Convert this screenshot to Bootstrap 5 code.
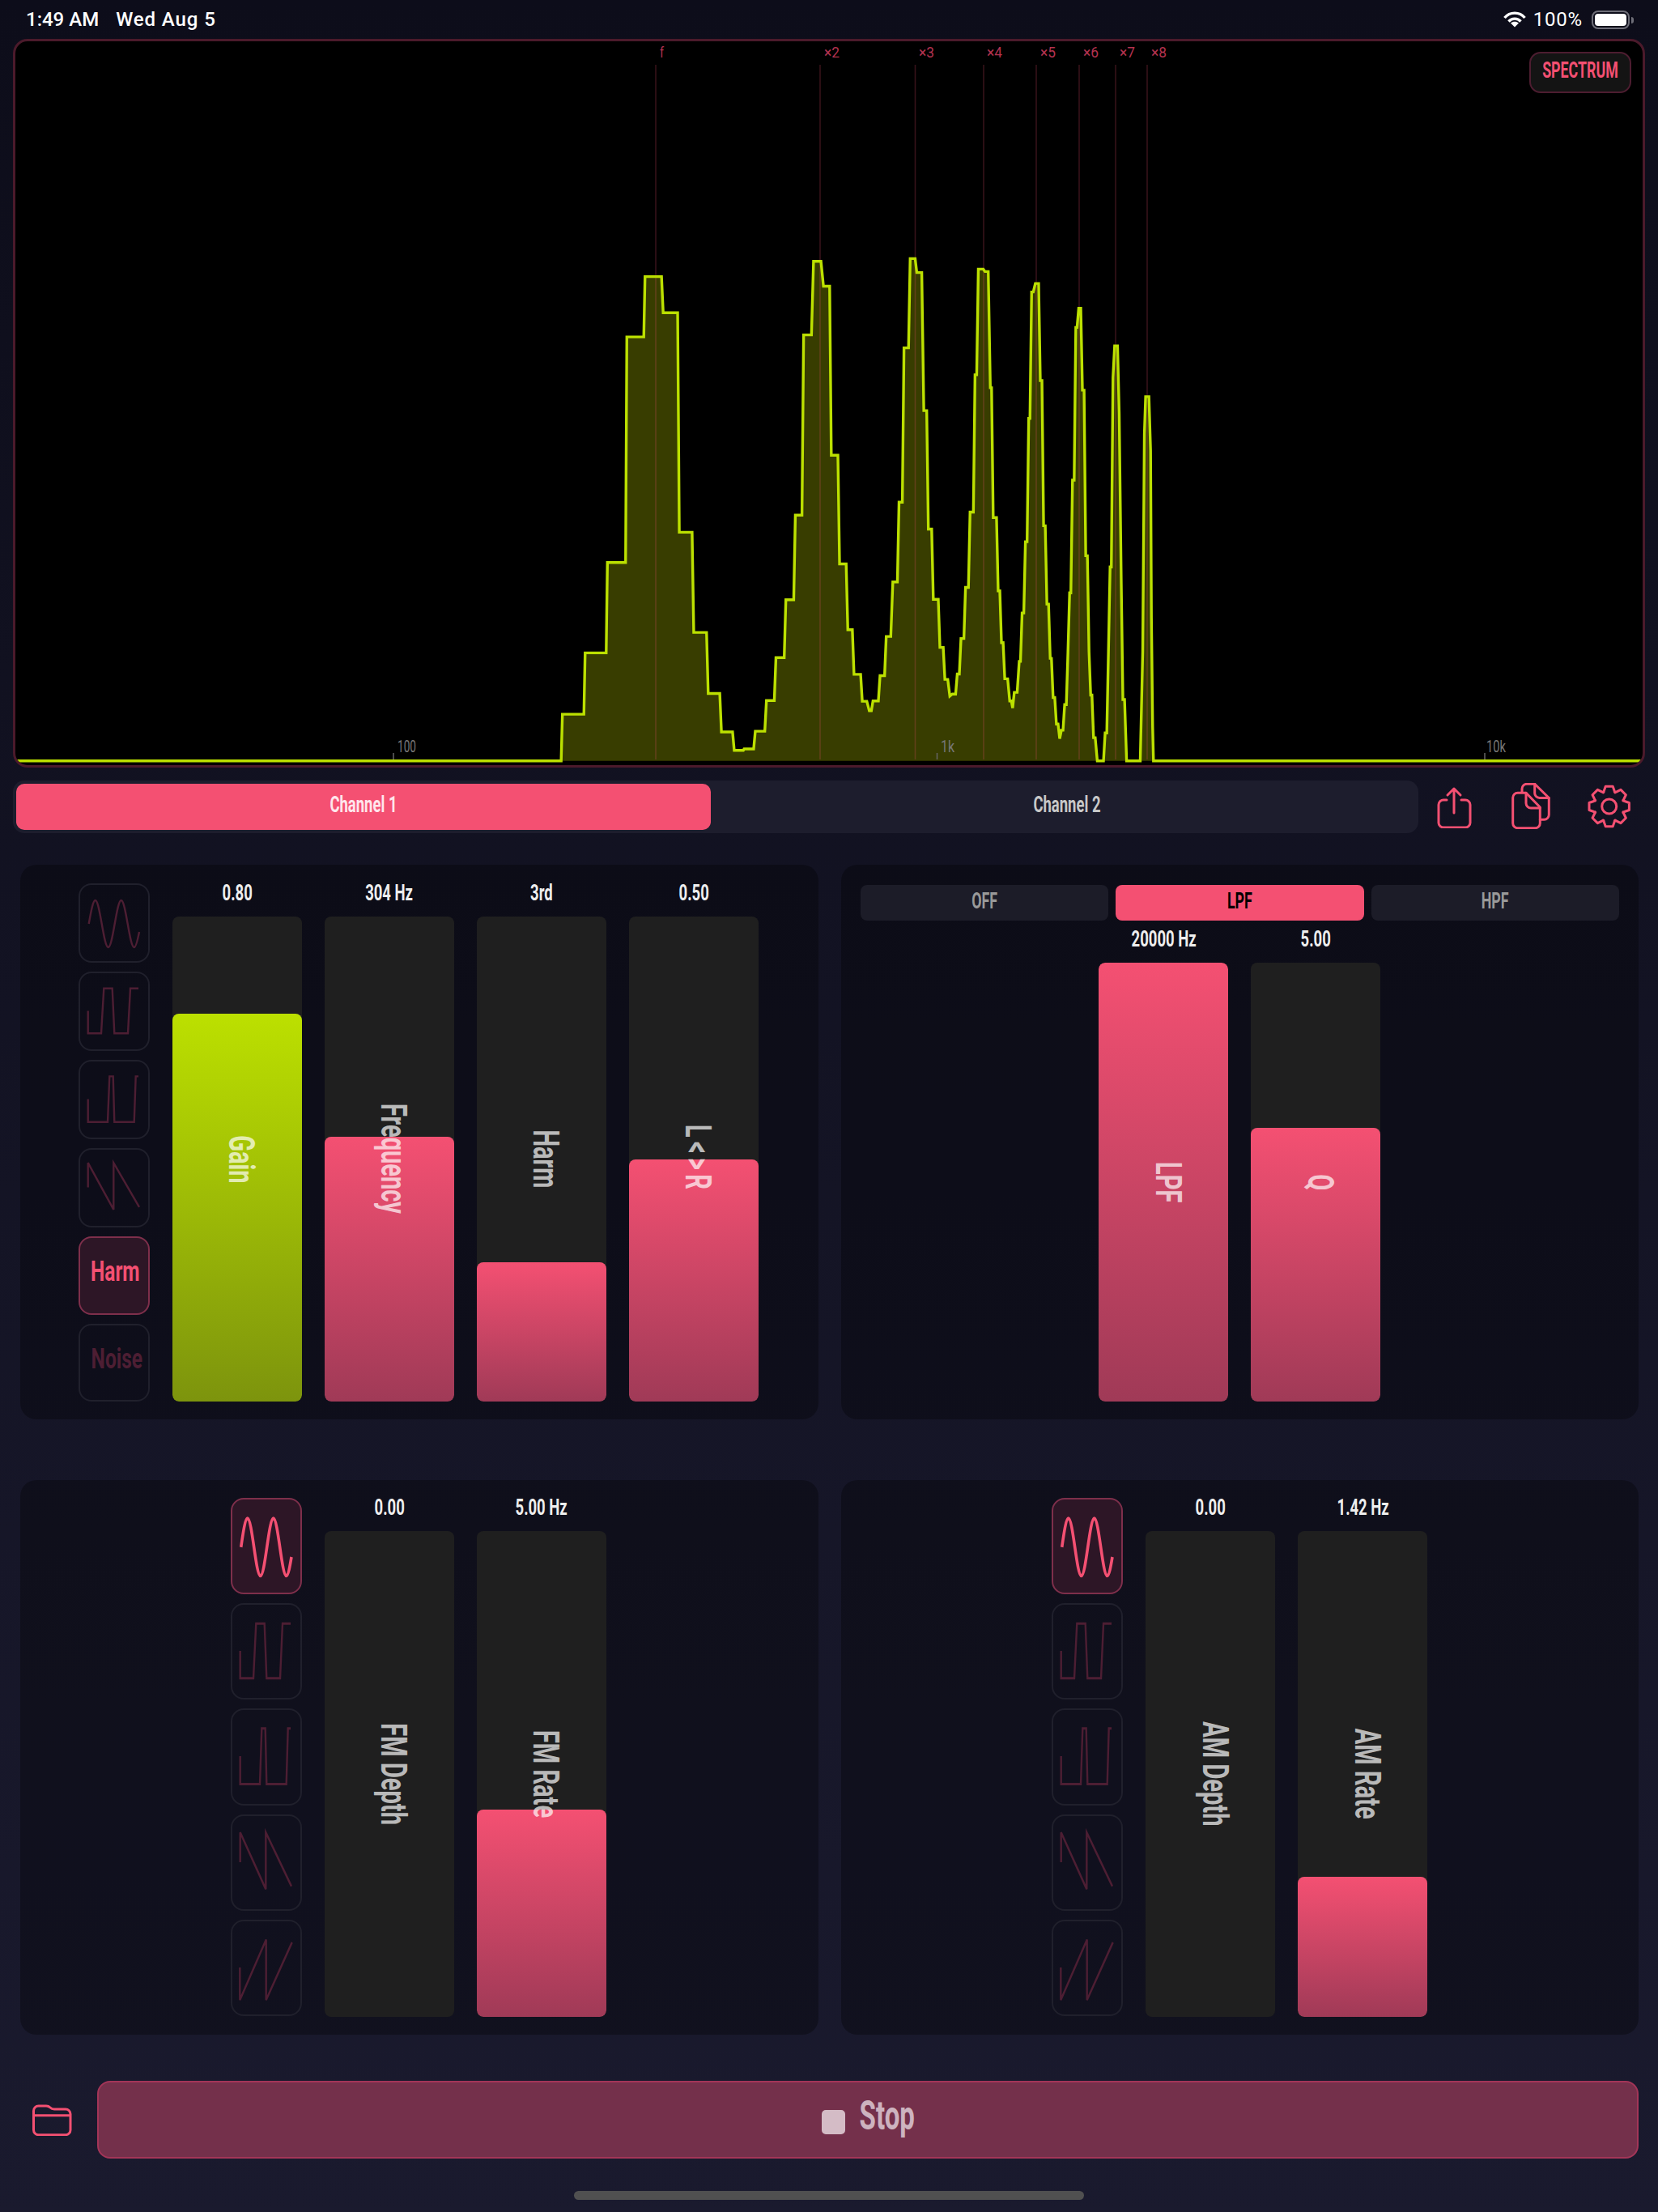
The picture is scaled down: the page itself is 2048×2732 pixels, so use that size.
<!DOCTYPE html>
<html lang="en">
<head>
<meta charset="UTF-8">
<title>Tone Generator</title>
<link rel="stylesheet" href="https://cdn.jsdelivr.net/npm/bootstrap@5.3.0/dist/css/bootstrap.min.css">
<style>
html, body { height: 2732px; }
body {
    margin: 0;
    width: 2048px;
    color: #eee;
    background: linear-gradient(180deg, #0d0d1a 0%, #1a1a2e 100%);
    font-family: Roboto, "Liberation Sans", sans-serif;
    overflow: hidden;
}
.cond { display: inline-block; transform: scaleX(.66); font-weight: 700; white-space: nowrap; }

.status-bar { height: 48px; padding: 0 35px 0 32px; font-size: 24px; font-weight: 500; color: #fff; line-height: 48px; }
.status-bar .when { margin-right: 21px; }
.status-bar .date { letter-spacing: .9px; }
.status-bar .pct { font-weight: 400; letter-spacing: .8px; }
.batt { width: 47px; height: 23px; border: 2px solid #6e6e78; border-radius: 8px; padding: 2px; position: relative; margin-left: 11px; }
.batt i { display: block; height: 100%; background: #fff; border-radius: 4px; }
.batt::after { content: ""; position: absolute; right: -7px; top: 6px; width: 3px; height: 8px; background: #6e6e78; border-radius: 0 3px 3px 0; }

.spectrum { height: 900px; margin: 0 16px; background: #000; border: 3px solid #4b1a2b; border-radius: 18px; position: relative; overflow: hidden; }
.spectrum svg { position: absolute; inset: 0; width: 100%; height: 100%; }
.spectrum text { font-family: Roboto, "Liberation Sans", sans-serif; }
.spec-badge { position: absolute; top: 13px; right: 13px; width: 126px; height: 51px; padding-bottom: 4px; margin-right: 1px; background: #141414; border: 2px solid #4d1d30; border-radius: 14px; color: #f45072; font-size: 27px; }

.tabs-row { margin-top: 16px; padding-left: 16px; }
.tabs { width: 1736px; height: 65px; padding: 4px; background: #1d1d2d; border-radius: 14px; gap: 10px; }
.tab-btn { flex: 1 1 0; height: 57px; padding: 0 0 5px; border: 0; border-radius: 10px; font-size: 28px; color: #c8c8c8; background: transparent; }
.tab-btn.on, .tab-btn.on:hover { flex: 0 0 858px; background: #f45072; color: #ffe6ec; }
.tool { stroke: #f45072; fill: none; stroke-width: 3; stroke-linejoin: round; stroke-linecap: round; flex: none; margin-top: 3px; }
.tool.share { margin-left: 23px; }
.tool.docs { margin-left: 49px; }
.tool.gear { margin-left: 45px; }

.panels { padding: 0 24px 0 25px; gap: 28px; }
.panels.top { margin-top: 39px; }
.panels.low { margin-top: 75px; }
.panel { flex: 0 0 985.5px; height: 685px; padding: 22px 24px; background: rgba(0,0,0,.3); border-radius: 20px; }
.panels.top .panel { padding-top: 23px; }
.panel.left-shift { padding-right: 26px; }
.wave-col { width: 88px; height: 640px; gap: 11px; margin-right: 28px; }
.wave-btn { flex: 1 1 0; width: 100%; padding: 0; border: 2px solid #20202c; border-radius: 16px; background: transparent; color: #4d1e33; font-size: 35px; line-height: 1; }
.wave-btn.on, .wave-btn.on:hover { background: #2d1626; border-color: #7e2f4b; color: #f45072; }
.wave-btn svg { display: block; fill: none; stroke: #4d1e33; stroke-width: 2.4; margin: -2px; width: calc(100% + 4px); height: calc(100% + 4px); }
.wave-btn path { vector-effect: non-scaling-stroke; }
.wave-btn.on svg { stroke: #f45072; stroke-width: 3.6; }
.wave-btn .cond { font-weight: 700; transform: scaleX(.7); margin: 0 5px 9px 0; }

.fader-col { width: 160px; margin-right: 28px; }
.fader-col:last-child { margin-right: 0; }
.val { height: 41px; line-height: 24px; font-size: 28px; text-align: center; color: #eee; }
.fader { flex: 1 1 0; background: #1f1f1f; border-radius: 8px; position: relative; overflow: hidden; }
.fill { width: 100%; border-radius: 8px; background: linear-gradient(180deg, #f45072, #a03a57); }
.fill.lime { background: linear-gradient(180deg, #bce000, #7d940d); }
.fader-name { position: absolute; inset: 0; padding-left: 11px; color: rgba(255,255,255,.7); }
.fader-name span { writing-mode: vertical-rl; font-size: 44px; line-height: 1; font-weight: 700; transform: scaleY(.66); white-space: nowrap; }
.fader-name .spaced { letter-spacing: 8px; }

.filter-row { gap: 9px; margin-top: 2px; margin-bottom: 11px; }
.filter-btn { flex: 1 1 0; height: 44px; padding: 0 0 5px; border: 0; border-radius: 8px; background: #1c1c28; color: #999; font-size: 27px; }
.filter-btn.on, .filter-btn.on:hover { background: #f45072; color: #000; }

.bottom-row { margin-top: 57px; padding: 0 24px 0 40px; gap: 31px; }
.stop-btn { flex: 1 1 0; height: 96px; padding: 0; background: #74304b; border: 2px solid #a33558; border-radius: 16px; color: #cdb3bf; font-size: 50px; }
.stop-btn:hover { background: #74304b; color: #cdb3bf; border-color: #a33558; }
.stop-sq { width: 29px; height: 30px; background: #d4bcc6; border-radius: 5px; margin-top: 6px; }
.stop-btn .cond { margin-right: -18px; margin-bottom: 9px; }
.home-bar { width: 630px; height: 11px; margin: 40px 0 0 709px; background: #505050; border-radius: 6px; }
</style>
</head>
<body>

<svg width="0" height="0" class="position-absolute">
    <defs>
        <path id="w-sine" d="M12.7 50C15.3 35.15 17.8 21 20.7 21C23.6 21 26.1 35.15 28.7 50C31.3 64.85 33.8 79 36.7 79C39.6 79 42.1 64.85 44.7 50C47.3 35.15 49.8 21 52.7 21C55.6 21 58.1 35.15 60.7 50C63.3 64.85 65.8 79 68.7 79C70.8 79 73 70 75 60"/>
        <path id="w-square" d="M11.7 48.6V76.3H28L31.3 20.8H41.7L44.3 76.3H61L64 20.8H74"/>
        <path id="w-pulse" d="M11.7 48.6V76.8H36L38.3 20.4H42.7L44.3 76.8H68.7L70.7 20.4H74"/>
        <path id="w-sawdown" d="M11.7 48.6V18.2L43.3 75.9V18.2L75 72.9"/>
        <path id="w-sawup" d="M11.3 48.5V81.5L43.7 20.2V81.5L75.7 23"/>
    </defs>
</svg>

<!-- status bar -->
<div class="status-bar d-flex align-items-center">
    <span class="when">1:49 AM</span><span class="date">Wed Aug 5</span>
    <span class="ms-auto d-flex align-items-center">
        <svg width="28" height="20" viewBox="0 0 28 20" fill="none" stroke="#fff" stroke-width="3.4" style="margin-right:9px">
            <path d="M1.5 8C8 .2 20 .2 26.5 8"/><path d="M6.5 12.5C10.5 8 17.5 8 21.5 12.5"/><path d="M14 19.5L9 14.6C12 12.2 16 12.2 19 14.6Z" fill="#fff" stroke="none"/>
        </svg>
        <span class="pct">100%</span>
        <span class="batt"><i></i></span>
    </span>
</div>

<!-- spectrum -->
<div class="spectrum">
    <svg viewBox="19 51 2010 894" preserveAspectRatio="none">
        <g transform="translate(660 300) scale(.5102 .4209)">
            <path fill="#383d00" stroke="none" d="M65 1520L68 1383H120L123 1203H174L177 938H221L224 276H265L268 99H308L312 205H347L351 849H382L386 1143H417L421 1322H449L453 1435H480L484 1489H506L508 1485H531L535 1433H558L562 1343H581L585 1217H605L609 1047H628L632 799H648L652 270H671L676 54H694L700 127H715L719 623H735L739 942H755L759 1135H770L774 1266H790L794 1345H805L811 1373H816L820 1344H833L837 1270H848L852 1155H863L868 995H879L883 761H891L895 308H906L910 46H922L926 87H938L943 492H950L954 840H962L966 1046H978L982 1187H990L994 1281H1001L1006 1330L1012 1324H1020L1024 1265H1029L1033 1161H1040L1044 1011H1051L1055 790H1063L1067 387H1071L1075 77H1087L1091 84H1099L1104 425H1107L1111 806H1119L1123 1021H1127L1131 1173H1135L1139 1279H1146L1151 1344H1155L1158 1365L1162 1319H1169L1174 1228H1177L1181 1086H1185L1189 877H1193L1197 515H1200L1204 144H1208L1213 119H1221L1225 404H1229L1233 830H1237L1241 1060H1245L1249 1219H1252L1256 1334H1260L1264 1412H1268L1272 1455L1276 1430H1280L1284 1355H1288L1292 1200L1296 1027H1299L1303 696H1307L1311 248H1314L1318 192H1323L1327 432H1331L1335 918H1339L1343 1200L1347 1327H1350L1354 1452H1358L1363 1520H1378L1382 1438H1386L1390 1200L1394 951H1397L1401 395L1405 302H1412L1416 500L1421 1000L1425 1340H1429L1434 1520H1467L1473 1200L1477 560L1480 451H1488L1492 610L1494 1100L1497 1420L1499 1520Z"/>
        </g>
        <g stroke="#f45072" stroke-opacity=".22" stroke-width="1.6">
            <path d="M810 80V938M1013 80V938M1130.5 80V938M1215 80V938M1280 80V938M1333 80V938M1378 80V938M1417 80V938"/>
        </g>
        <g stroke="#666" stroke-width="1.5"><path d="M486 930V938M1157.5 930V938M1834 930V938"/></g>
        <g transform="translate(660 300) scale(.5102 .4209)">
            <path fill="none" stroke="#bce000" stroke-width="3.4" vector-effect="non-scaling-stroke" d="M-1300 1520H65L68 1383H120L123 1203H174L177 938H221L224 276H265L268 99H308L312 205H347L351 849H382L386 1143H417L421 1322H449L453 1435H480L484 1489H506L508 1485H531L535 1433H558L562 1343H581L585 1217H605L609 1047H628L632 799H648L652 270H671L676 54H694L700 127H715L719 623H735L739 942H755L759 1135H770L774 1266H790L794 1345H805L811 1373H816L820 1344H833L837 1270H848L852 1155H863L868 995H879L883 761H891L895 308H906L910 46H922L926 87H938L943 492H950L954 840H962L966 1046H978L982 1187H990L994 1281H1001L1006 1330L1012 1324H1020L1024 1265H1029L1033 1161H1040L1044 1011H1051L1055 790H1063L1067 387H1071L1075 77H1087L1091 84H1099L1104 425H1107L1111 806H1119L1123 1021H1127L1131 1173H1135L1139 1279H1146L1151 1344H1155L1158 1365L1162 1319H1169L1174 1228H1177L1181 1086H1185L1189 877H1193L1197 515H1200L1204 144H1208L1213 119H1221L1225 404H1229L1233 830H1237L1241 1060H1245L1249 1219H1252L1256 1334H1260L1264 1412H1268L1272 1455L1276 1430H1280L1284 1355H1288L1292 1200L1296 1027H1299L1303 696H1307L1311 248H1314L1318 192H1323L1327 432H1331L1335 918H1339L1343 1200L1347 1327H1350L1354 1452H1358L1363 1520H1378L1382 1438H1386L1390 1200L1394 951H1397L1401 395L1405 302H1412L1416 500L1421 1000L1425 1340H1429L1434 1520H1467L1473 1200L1477 560L1480 451H1488L1492 610L1494 1100L1497 1420L1499 1520H2800"/>
        </g>
        <g fill="#b4324f" font-size="18">
            <text x="815" y="71" textLength="5" lengthAdjust="spacingAndGlyphs">f</text>
            <text x="1018" y="71" textLength="19" lengthAdjust="spacingAndGlyphs">×2</text>
            <text x="1135" y="71" textLength="19" lengthAdjust="spacingAndGlyphs">×3</text>
            <text x="1219" y="71" textLength="19" lengthAdjust="spacingAndGlyphs">×4</text>
            <text x="1285" y="71" textLength="19" lengthAdjust="spacingAndGlyphs">×5</text>
            <text x="1338" y="71" textLength="19" lengthAdjust="spacingAndGlyphs">×6</text>
            <text x="1383" y="71" textLength="19" lengthAdjust="spacingAndGlyphs">×7</text>
            <text x="1422" y="71" textLength="19" lengthAdjust="spacingAndGlyphs">×8</text>
        </g>
        <g fill="#777" font-size="20">
            <text x="491" y="929" textLength="23" lengthAdjust="spacingAndGlyphs">100</text>
            <text x="1162" y="929" textLength="17" lengthAdjust="spacingAndGlyphs">1k</text>
            <text x="1836" y="929" textLength="24" lengthAdjust="spacingAndGlyphs">10k</text>
        </g>
    </svg>
    <div class="spec-badge d-flex align-items-center justify-content-center"><span class="cond">SPECTRUM</span></div>
</div>

<!-- channel tabs and tools -->
<div class="tabs-row d-flex">
    <div class="tabs d-flex">
        <button class="btn tab-btn on"><span class="cond">Channel 1</span></button>
        <button class="btn tab-btn"><span class="cond">Channel 2</span></button>
    </div>
    <svg class="tool share" width="43" height="56" viewBox="0 0 43 56">
        <path d="M12 21H8a6 6 0 0 0-6 6V49a6 6 0 0 0 6 6H35a6 6 0 0 0 6-6V27a6 6 0 0 0-6-6H30"/>
        <path d="M21 37V7M13 15L21 7L29 15"/>
    </svg>
    <svg class="tool docs" width="48" height="57" viewBox="0 0 48 57">
        <path d="M7.7 12.3H18L35.3 30V49.7a6 6 0 0 1-6 6H7.7a6 6 0 0 1-6-6V18.3a6 6 0 0 1 6-6Z"/>
        <path d="M18 12.3V25a6 6 0 0 0 6 6H35.3"/>
        <path d="M13 11.3V7.3a6 6 0 0 1 6-6H28.7L46.3 18.5V39.3a6 6 0 0 1-6 6H35.3"/>
        <path d="M28.7 1.3V12a6 6 0 0 0 6 6.5H46.3"/>
    </svg>
    <svg class="tool gear" width="56" height="57" viewBox="-27.7 -29 56 57">
        <circle r="9"/>
        <path d="M-4.5 -24.7L4.5 -24.7L6.5 -18.9Q6.5 -15.7 8.77 -17.96L14.28 -20.65L20.65 -14.28L17.96 -8.77Q15.7 -6.5 18.9 -6.5L24.7 -4.5L24.7 4.5L18.9 6.5Q15.7 6.5 17.96 8.77L20.65 14.28L14.28 20.65L8.77 17.96Q6.5 15.7 6.5 18.9L4.5 24.7L-4.5 24.7L-6.5 18.9Q-6.5 15.7 -8.77 17.96L-14.28 20.65L-20.65 14.28L-17.96 8.77Q-15.7 6.5 -18.9 6.5L-24.7 4.5L-24.7 -4.5L-18.9 -6.5Q-15.7 -6.5 -17.96 -8.77L-20.65 -14.28L-14.28 -20.65L-8.77 -17.96Q-6.5 -15.7 -6.5 -18.9Z"/>
    </svg>
</div>

<!-- oscillator and filter -->
<div class="panels top d-flex">
    <div class="panel left-shift d-flex justify-content-center">
        <div class="wave-col d-flex flex-column">
            <button class="btn wave-btn"><svg viewBox="0 0 88 98" preserveAspectRatio="none"><use href="#w-sine"/></svg></button>
            <button class="btn wave-btn"><svg viewBox="0 0 88 98" preserveAspectRatio="none"><use href="#w-square"/></svg></button>
            <button class="btn wave-btn"><svg viewBox="0 0 88 98" preserveAspectRatio="none"><use href="#w-pulse"/></svg></button>
            <button class="btn wave-btn"><svg viewBox="0 0 88 98" preserveAspectRatio="none"><use href="#w-sawdown"/></svg></button>
            <button class="btn wave-btn on"><span class="cond">Harm</span></button>
            <button class="btn wave-btn"><span class="cond">Noise</span></button>
        </div>
        <div class="fader-col d-flex flex-column">
            <div class="val"><span class="cond">0.80</span></div>
            <div class="fader d-flex align-items-end">
                <div class="fill lime" style="height:80%"></div>
                <div class="fader-name d-flex align-items-center justify-content-center"><span>Gain</span></div>
            </div>
        </div>
        <div class="fader-col d-flex flex-column">
            <div class="val"><span class="cond">304 Hz</span></div>
            <div class="fader d-flex align-items-end">
                <div class="fill" style="height:54.6%"></div>
                <div class="fader-name d-flex align-items-center justify-content-center"><span>Frequency</span></div>
            </div>
        </div>
        <div class="fader-col d-flex flex-column">
            <div class="val"><span class="cond">3rd</span></div>
            <div class="fader d-flex align-items-end">
                <div class="fill" style="height:28.7%"></div>
                <div class="fader-name d-flex align-items-center justify-content-center"><span>Harm</span></div>
            </div>
        </div>
        <div class="fader-col d-flex flex-column">
            <div class="val"><span class="cond">0.50</span></div>
            <div class="fader d-flex align-items-end">
                <div class="fill" style="height:50%"></div>
                <div class="fader-name d-flex align-items-center justify-content-center"><span class="spaced">L&lt;&gt;R</span></div>
            </div>
        </div>
    </div>
    <div class="panel d-flex flex-column">
        <div class="filter-row d-flex">
            <button class="btn filter-btn"><span class="cond">OFF</span></button>
            <button class="btn filter-btn on"><span class="cond">LPF</span></button>
            <button class="btn filter-btn"><span class="cond">HPF</span></button>
        </div>
        <div class="d-flex justify-content-center flex-grow-1">
            <div class="fader-col d-flex flex-column">
                <div class="val"><span class="cond">20000 Hz</span></div>
                <div class="fader d-flex align-items-end">
                    <div class="fill" style="height:100%"></div>
                    <div class="fader-name d-flex align-items-center justify-content-center"><span>LPF</span></div>
                </div>
            </div>
            <div class="fader-col d-flex flex-column">
                <div class="val"><span class="cond">5.00</span></div>
                <div class="fader d-flex align-items-end">
                    <div class="fill" style="height:62.4%"></div>
                    <div class="fader-name d-flex align-items-center justify-content-center"><span>Q</span></div>
                </div>
            </div>
        </div>
    </div>
</div>

<!-- FM and AM -->
<div class="panels low d-flex">
    <div class="panel left-shift d-flex justify-content-center">
        <div class="wave-col d-flex flex-column">
            <button class="btn wave-btn on"><svg viewBox="0 0 88 98" preserveAspectRatio="none"><use href="#w-sine"/></svg></button>
            <button class="btn wave-btn"><svg viewBox="0 0 88 98" preserveAspectRatio="none"><use href="#w-square"/></svg></button>
            <button class="btn wave-btn"><svg viewBox="0 0 88 98" preserveAspectRatio="none"><use href="#w-pulse"/></svg></button>
            <button class="btn wave-btn"><svg viewBox="0 0 88 98" preserveAspectRatio="none"><use href="#w-sawdown"/></svg></button>
            <button class="btn wave-btn"><svg viewBox="0 0 88 98" preserveAspectRatio="none"><use href="#w-sawup"/></svg></button>
        </div>
        <div class="fader-col d-flex flex-column">
            <div class="val"><span class="cond">0.00</span></div>
            <div class="fader d-flex align-items-end">
                <div class="fader-name d-flex align-items-center justify-content-center"><span>FM Depth</span></div>
            </div>
        </div>
        <div class="fader-col d-flex flex-column">
            <div class="val"><span class="cond">5.00 Hz</span></div>
            <div class="fader d-flex align-items-end">
                <div class="fill" style="height:42.6%"></div>
                <div class="fader-name d-flex align-items-center justify-content-center"><span>FM Rate</span></div>
            </div>
        </div>
    </div>
    <div class="panel d-flex justify-content-center">
        <div class="wave-col d-flex flex-column">
            <button class="btn wave-btn on"><svg viewBox="0 0 88 98" preserveAspectRatio="none"><use href="#w-sine"/></svg></button>
            <button class="btn wave-btn"><svg viewBox="0 0 88 98" preserveAspectRatio="none"><use href="#w-square"/></svg></button>
            <button class="btn wave-btn"><svg viewBox="0 0 88 98" preserveAspectRatio="none"><use href="#w-pulse"/></svg></button>
            <button class="btn wave-btn"><svg viewBox="0 0 88 98" preserveAspectRatio="none"><use href="#w-sawdown"/></svg></button>
            <button class="btn wave-btn"><svg viewBox="0 0 88 98" preserveAspectRatio="none"><use href="#w-sawup"/></svg></button>
        </div>
        <div class="fader-col d-flex flex-column">
            <div class="val"><span class="cond">0.00</span></div>
            <div class="fader d-flex align-items-end">
                <div class="fader-name d-flex align-items-center justify-content-center"><span>AM Depth</span></div>
            </div>
        </div>
        <div class="fader-col d-flex flex-column">
            <div class="val"><span class="cond">1.42 Hz</span></div>
            <div class="fader d-flex align-items-end">
                <div class="fill" style="height:28.9%"></div>
                <div class="fader-name d-flex align-items-center justify-content-center"><span>AM Rate</span></div>
            </div>
        </div>
    </div>
</div>

<!-- transport -->
<div class="bottom-row d-flex align-items-center">
    <svg width="49" height="39" viewBox="0 0 49 39" fill="none" stroke="#f45072" stroke-width="3" stroke-linejoin="round">
        <path d="M1.5 8a6 6 0 0 1 6-6H17a7 7 0 0 1 5 2Q24 6 27 6H41a6 6 0 0 1 6 6V31.700a6 6 0 0 1-6 6H7.500a6 6 0 0 1-6-6Z"/>
        <path d="M1.500 13.700H47"/>
    </svg>
    <button class="btn stop-btn d-flex align-items-center justify-content-center">
        <span class="stop-sq"></span><span class="cond">Stop</span>
    </button>
</div>
<div class="home-bar"></div>

<script src="https://cdn.jsdelivr.net/npm/bootstrap@5.3.0/dist/js/bootstrap.bundle.min.js"></script>
</body>
</html>
